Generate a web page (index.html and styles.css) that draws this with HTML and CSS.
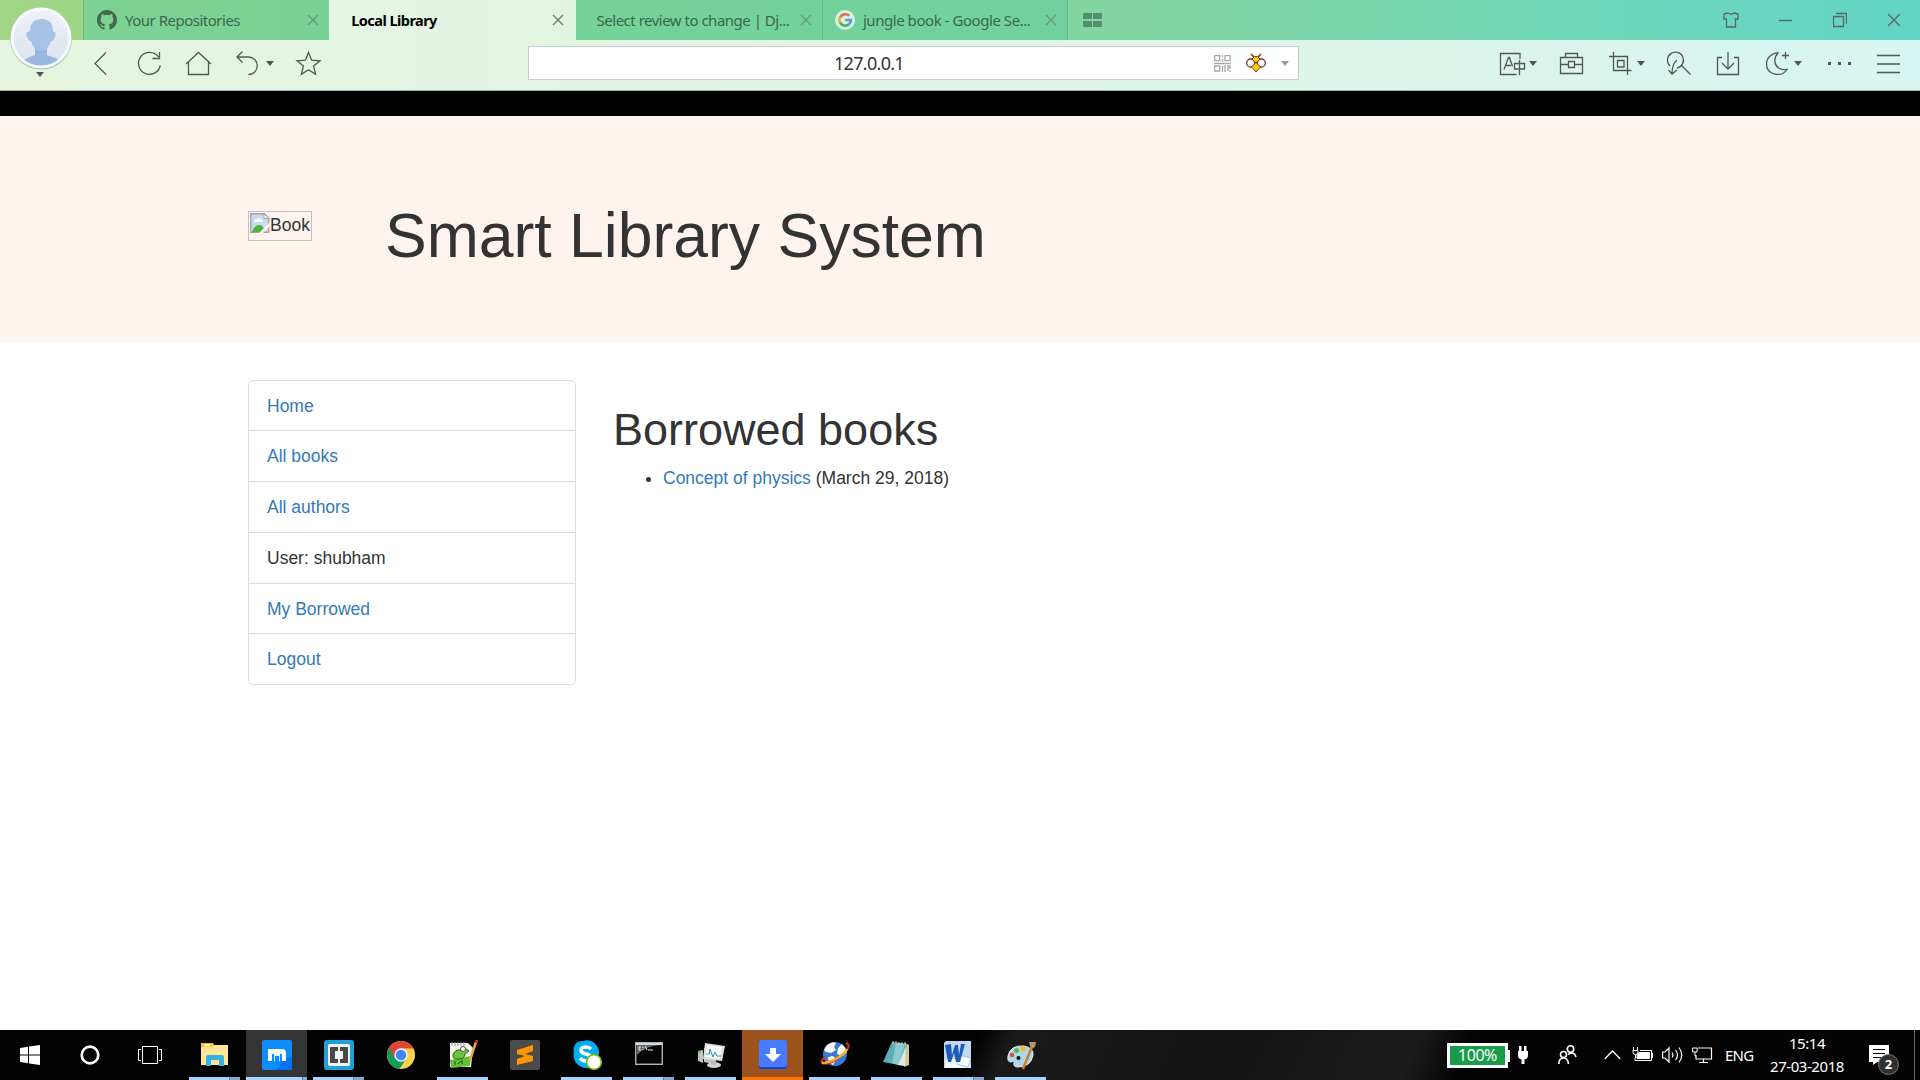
FILE: index.html
```html
<!DOCTYPE html>
<html lang="en">
<head>
<meta charset="utf-8">
<title>Local Library</title>
<link rel="stylesheet" href="styles.css">
</head>
<body>
<header class="browser">
  <div class="tabbar">
    <div class="profile">
      <div class="avatar">
        <svg width="64" height="64" viewBox="0 0 64 64"><defs><linearGradient id="av" x1="0" y1="0" x2="0" y2="1"><stop offset="0" stop-color="#edf2f7"/><stop offset="1" stop-color="#dbe3ed"/></linearGradient><clipPath id="avc"><circle cx="32" cy="32" r="27.5"/></clipPath></defs><circle cx="32" cy="32.500" r="31" fill="#a4c4a8"/><circle cx="32" cy="32" r="30.500" fill="#f7faff"/><circle cx="32" cy="32" r="27.500" fill="url(#av)"/><g clip-path="url(#avc)"><path d="M26 41v8c-5 2-11 4-14 8v7h41v-7c-4-5-10-6-15-8v-8z" fill="#98b8e2"/><path d="M21 25c0-8 4-12 11.500-12S44 17 44 25c3 1 3 3 2 6-1 3-2 4-4 4-2 6-5 10-10 10s-8-4-10-10c-2 0-3-1-4-4-1-3-1-5 3-6z" fill="#a6c2e4"/></g></svg>
        <i class="caret"></i>
      </div>
    </div>
    <div class="tab">
      <svg class="fav" width="20" height="20" viewBox="0 0 16 16"><path fill="#446850" d="M8 0C3.580 0 0 3.580 0 8c0 3.540 2.290 6.530 5.470 7.590.4.070.55-.17.55-.38 0-.19-.01-.82-.01-1.490-2.010.37-2.530-.49-2.690-.94-.09-.23-.48-.94-.82-1.130-.28-.15-.68-.52-.01-.53.63-.01 1.080.58 1.230.82.72 1.210 1.870.87 2.330.66.07-.52.28-.87.51-1.070-1.780-.2-3.640-.89-3.640-3.950 0-.87.31-1.590.82-2.150-.08-.2-.36-1.020.08-2.120 0 0 .67-.21 2.200.82a7.600 7.600 0 0 1 4 0c1.530-1.040 2.200-.82 2.200-.82.44 1.100.16 1.920.08 2.120.51.56.82 1.270.82 2.150 0 3.070-1.870 3.750-3.650 3.950.29.25.54.73.54 1.480 0 1.070-.01 1.930-.01 2.200 0 .21.15.46.55.38A8 8 0 0 0 16 8c0-4.420-3.580-8-8-8z"/></svg>
      <span class="t1">Your Repositories</span>
      <svg class="x" width="12" height="12" viewBox="0 0 12 12"><path d="M1 1l10 10M11 1L1 11"/></svg>
    </div>
    <div class="tab active">
      <span class="t2">Local Library</span>
      <svg class="x" width="12" height="12" viewBox="0 0 12 12"><path d="M1 1l10 10M11 1L1 11"/></svg>
    </div>
    <div class="tab nofav">
      <span class="t3">Select review to change | Dj...</span>
      <svg class="x" width="12" height="12" viewBox="0 0 12 12"><path d="M1 1l10 10M11 1L1 11"/></svg>
    </div>
    <div class="tab last">
      <svg class="fav" width="20" height="20" viewBox="0 0 20 20"><circle cx="10" cy="10" r="10" fill="#d9f0df"/><g fill="none" stroke-width="2.600"><path d="M5.100 7.500A5.800 5.800 0 0 1 14.200 5.800" stroke="#d8735a"/><path d="M5.100 12.800a5.800 5.800 0 0 1 0-5.600" stroke="#d8b93d"/><path d="M14 14.200a5.800 5.800 0 0 1-8.900-1.600" stroke="#4cb070"/><path d="M10.200 10h5.700a5.800 5.800 0 0 1-1.900 4.200" stroke="#5a9fd0"/></g></svg>
      <span class="t4">jungle book - Google Se...</span>
      <svg class="x" width="12" height="12" viewBox="0 0 12 12"><path d="M1 1l10 10M11 1L1 11"/></svg>
    </div>
    <svg class="newtab" width="19" height="14" viewBox="0 0 19 14"><path fill="#568e70" d="M0 0h9v6H0zM10 0h9v6h-9zM0 8h9v6H0zM10 8h9v6h-9z"/></svg>
    <div class="winctl">
      <svg width="16" height="16" viewBox="0 0 16 16"><path stroke="#287765" d="M1 2l4-1q3 2 6 0l4 1v5h-2.500v8h-9V7H1z"/></svg>
      <svg width="14" height="16" viewBox="0 0 14 16"><path d="M0 8.500h13"/></svg>
      <svg width="14" height="16" viewBox="0 0 14 16"><path d="M.5 4.500h10v10H.5zM3 1.500h10.500V12"/></svg>
      <svg width="14" height="16" viewBox="0 0 14 16"><path d="M1 2l12 12M13 2L1 14"/></svg>
    </div>
  </div>
  <div class="toolbar">
    <div class="tools left">
      <svg width="28" height="28" viewBox="90 50 28 28"><path d="M106 52.500L95 63.500l11 11"/></svg>
      <svg width="28" height="28" viewBox="136 50 28 28"><path d="M158.500 57A11 11 0 1 0 160.300 65.500M159.500 52v6.500h-7"/></svg>
      <svg width="28" height="28" viewBox="184 50 28 28"><path d="M186 64l12.500-11.500L211 64M188.500 62v12.500h20V62"/></svg>
      <svg width="44" height="28" viewBox="232 50 44 28"><path d="M242.500 51.500L237 57l5.500 5.500M237 57h11.500a8.700 8.700 0 0 1 0 17.500"/><path class="fill" d="M266 61h8l-4 5z"/></svg>
      <svg width="28" height="28" viewBox="294 50 28 28"><path d="M308.500 52.500l3.100 7.700 8.400.6-6.400 5.300 2 8.200-7.100-4.500-7.100 4.500 2-8.200-6.400-5.300 8.400-.6z"/></svg>
    </div>
    <div class="address">
      <span class="url">127.0.0.1</span>
      <svg class="qr" width="17" height="17" viewBox="0 0 17 17"><path d="M.7.700h5v5h-5zM11 .700h5v5h-5zM.7 11h5v5h-5zM8.500 0v2M8.500 4v3M0 8.500h17M8.500 11v6M11 10v7M13 11h3v2h-2v3M16 15v2"/></svg>
      <svg class="bee" width="22" height="20" viewBox="0 0 22 20"><path d="M6 1l3 3M16 1l-3 3" stroke="#7b3813" stroke-width="1.500"/><circle cx="5.700" cy="10" r="4" fill="#fff" stroke="#7b3813" stroke-width="1.300"/><circle cx="16.300" cy="10" r="4" fill="#fff" stroke="#7b3813" stroke-width="1.300"/><path d="M7 6l2.500-2.500h3L15 6l-4 4zM6.500 14L11 9.500l4.500 4.500-4.500 5z" fill="#fc0" stroke="#7b3813"/></svg>
      <i class="caret grey"></i>
    </div>
    <div class="tools right">
      <svg width="42" height="28" viewBox="1498 50 42 28"><path d="M1520 59v-5.500h-19.500v21h16M1504 69.500l4.500-12h1l3 9M1506 65.500h5M1514.500 63.500h10v5.500h-10zM1519.500 60v15"/><path class="fill" d="M1529 61h8l-4 5z"/></svg>
      <svg width="28" height="28" viewBox="1558 50 28 28"><path d="M1560.500 57.500h22v16h-22zM1560.500 64.500h8M1574.500 64.500h8M1568.500 61.500h6v6h-6zM1565.500 57v-3.500h12V57"/></svg>
      <svg width="40" height="28" viewBox="1607 50 40 28"><path d="M1609 56.500h18.500V75M1613.500 52v18.500h18M1617.500 60.500h6.500v6.500h-6.500z"/><path class="fill" d="M1637 61h8l-4 5z"/></svg>
      <svg width="28" height="28" viewBox="1665 50 28 28"><path d="M1670 66a8 8 0 1 1 7 2M1682 66l8.500 8.500M1677 60q-5 4-5 14M1668.500 70l3.500 4 5-4"/></svg>
      <svg width="28" height="28" viewBox="1714 50 28 28"><path d="M1722 57.500h-4.500v17h21v-17h-4.500M1728 52v17M1722 63l6 6 6-6"/></svg>
      <svg width="40" height="28" viewBox="1764 50 40 28"><path d="M1778 53c-5-.5-11.500 4-11.500 11 0 11 15 14 20.500 5.500-6 1-11-2-12-7-.6-4 .5-7 3-9.500zM1785.500 52v7M1782 55.500h7"/><path class="fill" d="M1794 61h8l-4 5z"/></svg>
      <svg width="28" height="28" viewBox="1826 50 28 28"><path class="fill" d="M1828 62h3v3h-3zM1838 62h3v3h-3zM1848 62h3v3h-3z"/></svg>
      <svg width="28" height="28" viewBox="1875 50 28 28"><path d="M1877 55.500h23M1877 64h23M1877 72.500h23"/></svg>
    </div>
  </div>
</header>

<main class="page">
  <div class="strip"></div>
  <section class="hero">
    <div class="broken"><svg width="20" height="20" viewBox="0 0 20 20"><path d="M.8.800h13.400l4.500 4.500v13.900H.8z" fill="#c7daf5" stroke="#a3a3a3" stroke-width="1.400"/><path d="M4 9q0-3 3-3 1-2 3 0 3 0 3 3z" fill="#fff"/><path d="M2 19q3-8 8-7 4 1 5 7z" fill="#53b13b"/><path d="M14 1v4.500h5z" fill="#fff" stroke="#a3a3a3"/><path d="M20 9v4L13 20H9z" fill="#fff3ee"/></svg><span>Book</span></div>
    <h1>Smart Library System</h1>
  </section>
  <div class="content">
    <ul class="menu">
      <li><a>Home</a></li>
      <li><a>All books</a></li>
      <li><a>All authors</a></li>
      <li>User: shubham</li>
      <li class="short"><a>My Borrowed</a></li>
      <li><a>Logout</a></li>
    </ul>
    <section class="loans">
      <h2>Borrowed books</h2>
      <ul><li><a>Concept of physics</a> (March 29, 2018)</li></ul>
    </section>
  </div>
</main>

<footer class="taskbar">
  <div class="sys"><svg width="20" height="20" viewBox="0 0 20 20"><path fill="#fff" d="M0 3l8-1.200V9.500H0zM9 1.600L20 0v9.500H9zM0 10.500h8v7.700L0 17zM9 10.500h11V20L9 18.400z"/></svg></div>
  <div class="sys"><svg width="20" height="20" viewBox="0 0 20 20"><circle cx="10" cy="10" r="8.300" fill="none" stroke="#fff" stroke-width="2.700"/></svg></div>
  <div class="sys wide"><svg width="24" height="18" viewBox="0 0 24 18"><path fill="none" stroke="#fff" d="M4.500.5h15v17h-15zM3 3.500H.5v11H3M21 3.500h2.500v11H21"/></svg></div>
  <div class="app run multi"><svg width="30" height="30" viewBox="0 0 30 30"><path fill="#f5c532" d="M1 3h12l2 3v4H1z"/><path fill="#fff" d="M4 4.500h6V6H4z"/><path fill="#ffe694" d="M1 7h11l3-2h13v20H1z"/><path fill="#37b0e3" d="M6 26V17q0-2 2-2h14q2 0 2 2v9h-5v-6h-8v6z"/></svg></div>
  <div class="app run multi current"><svg width="30" height="30" viewBox="0 0 30 30"><rect width="30" height="30" rx="2" fill="#0b8cff"/><path d="M12 30q10-4 7-12h11v12z" fill="#0074f5"/><path fill="#fff" d="M6 9h14q4 0 4 4v8h-4v-7h-2v7h-1v-5h-4v5h-1v-7h-2v7H6z"/></svg></div>
  <div class="app run multi"><svg width="30" height="30" viewBox="0 0 30 30"><rect width="30" height="30" rx="3" fill="#209fd8"/><rect x="4" y="4" width="22" height="22" rx="2" fill="#f4f4f4"/><path fill="#484848" d="M6 7h8v4h-3v8h3v4H6zM24 7h-8v4h3v8h-3v4h8z"/></svg></div>
  <div class="app"><svg width="28" height="28" viewBox="0 0 28 28"><circle cx="14" cy="14" r="14" fill="#ffd04c"/><path fill="#db4437" d="M1.800 7A14 14 0 0 1 26.200 7.500H14L8 17.500z"/><path fill="#0f9d58" d="M1.800 7A14 14 0 0 0 12.500 27.900L19 18z"/><path fill="#db4437" d="M1.800 7L8 17.500 14 8z"/><circle cx="14" cy="14" r="6.700" fill="#f1f1f1"/><circle cx="14" cy="14" r="5.200" fill="#4285f4"/></svg></div>
  <div class="app run"><svg width="30" height="30" viewBox="0 0 30 30"><path fill="#f5f6ef" d="M2 3h18l5 5-2 19H2z"/><path fill="#62bf35" d="M2 20l21-4-1 10-19 2z"/><path stroke="#999" d="M4 2v4M7 2v4M10 2v4M13 2v4M16 2v4"/><path d="M5 15q2-6 8-5l4-2 4 3-4 3q0 5-7 5-6 0-5-4z" fill="#6bc33a" stroke="#365d20"/><circle cx="15" cy="9" r="2.500" fill="#fff" stroke="#555"/><path stroke="#264a21" d="M7 25v-4M10 24l3-3M14 24v-4"/><path d="M28 2l-6 18" stroke="#e5a93b" stroke-width="2.500"/><path d="M29 0l-1 3" stroke="#bd353c" stroke-width="2.500"/></svg></div>
  <div class="app"><svg width="30" height="30" viewBox="0 0 30 30"><rect width="30" height="30" rx="2" fill="#4b4b4b"/><path fill="#ff9800" d="M7 10l16-5v6l-8 3 8 2v5L7 25v-6l8-3-8-2z"/></svg></div>
  <div class="app run"><svg width="30" height="30" viewBox="0 0 30 30"><path fill="#00aff0" d="M2 12A8.500 8.500 0 0 1 11 1a12 12 0 0 1 15 16 8 8 0 0 1-9 11A13 13 0 0 1 2 12z"/><path fill="none" stroke="#fff" stroke-width="3.500" d="M19 9q-2-2-5-2-5 0-5 3 0 3 5 4t5 4q0 3-5 3-4 0-6-3"/><circle cx="22" cy="22" r="7.300" fill="#fff" stroke="#7fba00" stroke-width="1.500"/></svg></div>
  <div class="app run multi"><svg class="raised" width="28" height="24" viewBox="0 0 28 24"><rect x=".7" y=".7" width="26.600" height="21.600" fill="#050505" stroke="#a8b4bd" stroke-width="1.400"/><path d="M1 1h26v2H1z" fill="#d2dce1"/><path fill="#666" d="M2 3h24Q10 4 2 13z"/><path d="M6 5H4v3h2M8 5v1M8 7v1M10 4l2 4M13 8h5" stroke="#eee" fill="none"/></svg></div>
  <div class="app run"><svg width="30" height="30" viewBox="0 0 30 30"><path fill="#bfc3c3" d="M2 11l5-1v13l-5-2zM8 8l9 3v13l-9-2z"/><path fill="#dedede" d="M9 3l20 3-3 15-19-2z"/><path fill="#f8fbfc" d="M11 5l15 2-2 12-15-2z"/><path fill="none" stroke="#358bc0" d="M10 14h3l1-5 3 8 2-5 2 4h4"/><ellipse cx="18" cy="25" rx="7" ry="3" fill="#d4d4d4"/><path d="M15 20h5v5h-5z" fill="#bbb"/><path stroke="#73d245" stroke-width="2" d="M2 12h3"/></svg></div>
  <div class="app run alert"><svg width="28" height="30" viewBox="0 0 28 30"><rect width="28" height="29" rx="2" fill="#0a42e6"/><rect width="28" height="27" rx="2" fill="#487aff"/><path fill="#fff" d="M11 8h6v6h5l-8 8-8-8h5z"/></svg></div>
  <div class="app run"><svg width="30" height="30" viewBox="0 0 30 30"><circle cx="15" cy="14" r="12" fill="#3979d7"/><path fill="#fff" d="M7 5q6-4 9-2l-2 4 2 3-5 3-5-1-2-2zM18 8l4-4q4 4 5 8l-4 4-6-2zM8 17l5-1 3 3-3 6q-5-2-5-8z"/><path d="M26 3q7 3-5 13T2 23q-2-2 3-6" fill="none" stroke="#db3020" stroke-width="2"/><path d="M2 23q7 0 17-6 7-5 8-8" fill="none" stroke="#ffae24" stroke-width="2.500"/></svg></div>
  <div class="app run"><svg width="30" height="30" viewBox="0 0 30 30"><path fill="#d8c88d" d="M23 3l4 2v20l-5 2z"/><path fill="#5fadb5" d="M10 2l15 2-3 22L1 22z"/><path fill="#aee0e0" d="M14 3l9 1-7 21-6-2z" opacity=".6"/><path fill="#dce9e9" d="M24 6l-1 20-7-1z"/><path stroke="#ddd" d="M11 1v3M14 1v3M17 2v3M20 2v3M23 2v3"/></svg></div>
  <div class="app run multi word"><svg width="28" height="28" viewBox="0 0 28 28"><path fill="#c3d9f3" d="M3 0h25v27H1V2z"/><path fill="#f3f7fc" d="M3 18h24v9H2z"/><path fill="#fff" stroke="#8aafe0" stroke-width=".7" d="M15 14l13 3-3 9-11-3z"/><path fill="#1b5cb8" d="M2 4l6-1 1 11 3-10h3l1 10 2-11h4l-5 18h-4l-2-9-3 9H5z"/></svg></div>
  <div class="app run"><svg width="30" height="30" viewBox="0 0 30 30"><path fill="#add8ec" stroke="#dceff6" d="M2 16Q4 5 18 6q10 2 9 9-2 12-15 12-5 0-4-4 1-3-3-1-4 0-3-6z"/><circle cx="12.500" cy="18" r="2" fill="#111"/><circle cx="6" cy="15" r="2.300" fill="#df4b43"/><circle cx="10.500" cy="10.500" r="2.500" fill="#5ab643"/><circle cx="17" cy="8.500" r="2.700" fill="#ffb629"/><path d="M27 4L17 29" stroke="#d27b2d" stroke-width="2.500"/><path fill="#bd9362" d="M23 2l7 0-1 5-4 2z"/></svg></div>
  <div class="tray">
    <div class="battery">100%</div>
    <svg width="10" height="18" viewBox="0 0 10 18"><path fill="#fff" d="M1 0h2.500v5H6V0h2.500v5H10v4q0 4-3.500 4.500V18h-3v-4.500Q0 13 0 9V5h1z"/></svg>
    <svg class="people" width="19" height="20" viewBox="0 0 19 20"><g fill="none" stroke="#fff" stroke-width="1.600"><circle cx="12.500" cy="4" r="3.200"/><circle cx="5.500" cy="9.500" r="3"/><path d="M.8 19q0-6 5-6 4 0 4.700 6M10 9.500q6-4 8 2.500"/></g></svg>
    <svg class="chev" width="17" height="10" viewBox="0 0 17 10"><path d="M.7 9l7.800-8 7.800 8" fill="none" stroke="#fff" stroke-width="1.300"/></svg>
    <svg class="bat2" width="21" height="16" viewBox="0 0 21 16"><path d="M7 5.500h10.500v6H5v-3z" fill="#fff" stroke="#fff"/><path d="M3 11v2.500h16.500v-10H8M20.500 6v5" fill="none" stroke="#fff"/><path d="M1.500 0v3M5.500 0v3M1 3.500h5v2q0 2-2.500 2T1 5.500zM3.500 8v3" stroke="#fff" fill="#111"/></svg>
    <svg class="snd" width="21" height="18" viewBox="0 0 21 18"><path fill="none" stroke="#fff" stroke-width="1.200" d="M.6 6H3l4-4v14l-4-4H.6zM10 6.500q2 2.500 0 5M13.500 4q4 5 0 10M17 1.500q5.500 7.500 0 15"/></svg>
    <svg class="net" width="21" height="18" viewBox="0 0 21 18"><path fill="none" stroke="#fff" stroke-width="1.200" d="M6 2h13.500v11H4V9M11.500 13v3.500M7 16.500h9"/><path d="M.6 2h4.500v4H.6zM3 6v4h1" fill="none" stroke="#fff"/></svg>
    <span class="lang">ENG</span>
    <div class="clock"><span>15:14</span><span class="date">27-03-2018</span></div>
    <div class="notes"><svg width="20" height="20" viewBox="0 0 20 20"><path fill="#fff" d="M0 0h20v17H8l-4 3v-3H0z"/><path d="M4 4.500h12M4 8.500h12M4 12.500h8" stroke="#000"/></svg><b>2</b></div>
  </div>
</footer>
</body>
</html>
```
FILE: styles.css
```css
* { box-sizing: border-box; }
body {
  margin: 0;
  width: 1920px;
  height: 1080px;
  overflow: hidden;
  display: flex;
  flex-direction: column;
  background: #fff;
  color: #333;
  font: 17.5px/25px "Liberation Sans", Arial, sans-serif;
}
svg { display: block; flex: none; }

/* Browser chrome */
.browser {
  height: 91px;
  flex: none;
  border-bottom: 1px solid #9cb9ac;
  background: linear-gradient(90deg, #a0d684 0, #8fd68d 480px, #80d6a3 1180px, #70d6b7 1560px, #62d5c6 1920px);
  font-family: "Noto Sans", "Open Sans", sans-serif;
}
.tabbar { height: 40px; display: flex; align-items: stretch; }
.profile { width: 83px; position: relative; }
.avatar { position: absolute; z-index: 2; left: 9px; top: 6px; width: 64px; }
.caret {
  display: block;
  border: 4px solid transparent;
  border-top: 5px solid #555;
  border-bottom: 0;
}
.avatar .caret { margin: 2px auto 0 27px; width: 8px; }
.tab {
  width: 246.3px;
  flex: none;
  display: flex;
  align-items: center;
  padding: 0 10px 0 13px;
  border-left: 1px solid #67b286;
  background: rgba(98, 207, 158, .55);
  color: #3b684c;
  font-size: 15px;
  white-space: nowrap;
}
.tab span { margin-left: 8px; line-height: 20px; }
.tab .x { margin-left: auto; }
.tab.active { background: rgba(255, 255, 255, .75); color: #000; font-weight: 700; border-left-color: transparent; padding-right: 12px; }
.tab.active span { font-size: 14.5px; }
.tab.nofav { border-left-color: transparent; padding-left: 12px; }
.tab.last { padding-left: 12px; border-right: 1px solid #67b286; }
.x path { fill: none; stroke: #639b7a; stroke-width: 1.4; }
.active .x path { stroke: #727a70; }
.t1 { letter-spacing: -.5px; }
.t2 { letter-spacing: -.55px; }
.t3 { letter-spacing: -.5px; }
.t4 { letter-spacing: -.45px; }
.newtab { margin: 13px 0 0 15px; }
.winctl { margin-left: auto; display: flex; align-items: center; gap: 40px; padding-right: 19px; }
.winctl svg:first-child { margin-right: 0; }
.winctl path { fill: none; stroke: #566762; stroke-width: 1.3; }
.toolbar { height: 50px; display: flex; align-items: center; background: rgba(255, 255, 255, .75); padding: 0 17px 0 90px; }
.tools { display: flex; align-items: center; padding-bottom: 2px; }
.tools path { fill: none; stroke: #555; stroke-width: 1.3; }
.tools .fill { fill: #555; stroke: none; }
.left { gap: 18px; width: 438px; }
.left svg:nth-child(3) { margin-left: 2px; }
.left svg:nth-child(4) { margin-left: 2px; }
.right { margin-left: auto; gap: 20px; }
.right svg:nth-child(2) { margin-left: -2px; }
.right svg:nth-child(3) { margin-left: 1px; }
.right svg:nth-child(4) { margin-left: -2px; }
.right svg:nth-child(5) { margin-left: 1px; }
.right svg:nth-child(6) { margin-left: 2px; }
.right svg:nth-child(7) { margin-left: 2px; }
.right svg:nth-child(8) { margin-left: 1px; }
.address {
  width: 771px;
  height: 34px;
  margin-top: -4px;
  display: flex;
  align-items: center;
  background: #fff;
  border: 1px solid #c8cbd4;
  padding-right: 9px;
}
.url { font-size: 18px; color: #333; margin-left: 305px; letter-spacing: -.7px; }
.qr { margin-left: auto; margin-right: 14px; }
.qr path { fill: none; stroke: #a9a9a9; stroke-width: 1.3; }
.bee { margin-right: 14px; }
.caret.grey { border-top-color: #999; }

/* Library page */
.page { flex: 1; }
.strip { height: 25px; background: #000; }
.hero { height: 226px; background: #fff3ee; padding: 85px 0 0 248px; display: flex; align-items: flex-start; }
.broken { width: 64px; height: 30px; margin-top: 10px; border: 1px solid #c0c0c0; display: flex; padding: 1px; }
.broken span { line-height: 25px; }
h1, h2 { margin: 0; font-weight: 500; color: #333; }
h1 { font-size: 62.5px; line-height: 68px; margin-left: 73px; }
.content { display: flex; padding: 38px 0 0 248px; gap: 37px; }
ul { margin: 0; padding: 0; }
.menu { width: 328px; list-style: none; border: 1px solid #ddd; border-radius: 5px; }
.menu li { height: 51px; padding: 13px 18px; border-bottom: 1px solid #ddd; }
.menu li:first-child, .menu .short { height: 50px; }
.menu li:last-child { border-bottom: 0; height: 50px; }
a { color: #337ab7; }
.loans { padding-top: 25px; }
h2 { font-size: 45px; line-height: 49px; }
.loans ul { padding-left: 50px; margin-top: 12px; }

/* Taskbar */
.taskbar {
  height: 50px;
  flex: none;
  display: flex;
  color: #fff;
  background: linear-gradient(115deg, #020202 0 890px, #191919 920px, #131313 1120px, #1b1b1b 1290px, #030303 1340px);
  font-family: "Noto Sans", "Open Sans", sans-serif;
}
.sys { width: 60px; display: flex; align-items: center; justify-content: center; }
.sys.wide { width: 64px; padding-right: 4px; }
.app {
  width: 62px;
  display: flex;
  align-items: center;
  justify-content: center;
  padding-right: 1px;
  background: no-repeat 5px 100% / 51px 3px;
}
.app.word { padding-right: 4px; }
.raised { margin-bottom: 2px; }
.run { background-image: linear-gradient(#a6d3ff, #a6d3ff); }
.multi { background-image: linear-gradient(90deg, #a6d3ff 0 40px, #577797 40px 41px, #86aacf 41px); }
.current { background-color: #343434; background-image: linear-gradient(90deg, #a6d3ff 0 56px, #577797 56px 57px, #86aacf 57px); background-position: 0 100%; background-size: 61px 3px; }
.alert { background-color: #9c541c; background-image: linear-gradient(#ff7400, #ff7400); background-size: 62px 3px; background-position: 0 100%; }
.alert, .current { background-clip: content-box; }
.tray { margin-left: auto; display: flex; align-items: center; height: 50px; padding-right: 5px; }
.battery {
  width: 61px;
  height: 25px;
  background: #199c4a;
  border: 3px solid #fff;
  position: relative;
  margin-right: 10px;
  font-size: 16px;
  line-height: 18px;
  text-align: center;
  letter-spacing: -.5px;
}
.battery::after {
  content: "";
  position: absolute;
  left: 58px;
  top: 4px;
  width: 2px;
  height: 12px;
  background: #fff;
}
.people { margin-left: 30px; }
.chev { margin-left: 27px; }
.bat2 { margin-left: 11px; }
.snd { margin-left: 9px; }
.net { margin-left: 9px; }
.lang { font-size: 15px; width: 28px; margin-left: 12px; margin-right: 1px; letter-spacing: -.8px; padding-top: 1px; }
.clock { width: 80px; margin-left: 13px; margin-right: 1px; display: flex; flex-direction: column; align-items: center; font-size: 15px; line-height: 23px; letter-spacing: -.45px; padding-bottom: 1px; }
.notes { position: relative; width: 46px; margin-left: 21px; height: 50px; padding-top: 15px; border-right: 1px solid #666; }
.notes b {
  position: absolute;
  left: 9px;
  top: 24px;
  width: 21px;
  height: 21px;
  border: 1px solid #777;
  border-radius: 50%;
  background: #303030;
  font-size: 13px;
  line-height: 19px;
  text-align: center;
}
```
